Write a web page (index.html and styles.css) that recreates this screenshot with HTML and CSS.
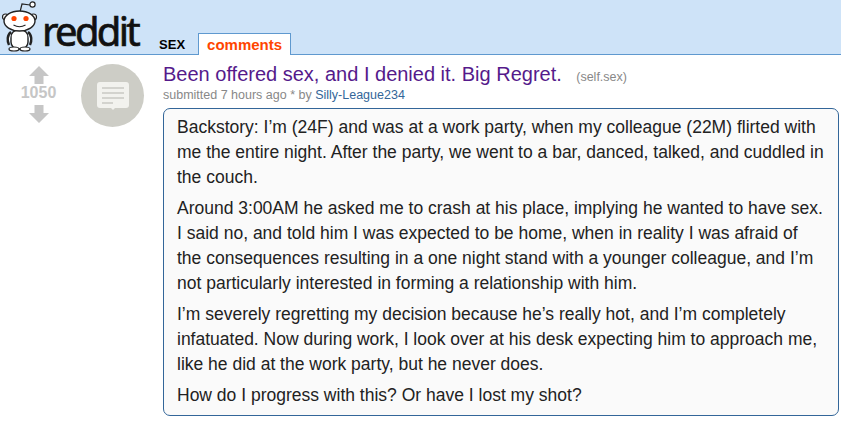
FILE: index.html
```html
<!DOCTYPE html>
<html lang="en">

<head>
    <meta charset="UTF-8">
    <meta name="viewport" content="width=device-width, initial-scale=1.0">
    <title>Been offered sex, and I denied it. Big Regret.</title>
    <link rel="stylesheet" href="styles.css">
</head>

<body>
    <div class="header">
        <svg class="snoo" width="38" height="52" viewBox="0 0 38 52">
            <path d="M18.500 13 L21 3 L29 4" fill="none" stroke="#222" stroke-width="1.2" />
            <circle cx="31.500" cy="3.500" r="2.600" fill="#fff" stroke="#222" stroke-width="1.2" />
            <circle cx="4.500" cy="16" r="3" fill="#fff" stroke="#222" stroke-width="1.2" />
            <circle cx="32.500" cy="16" r="3" fill="#fff" stroke="#222" stroke-width="1.2" />
            <rect x="10" y="29" width="17" height="19" rx="7" fill="#fff" stroke="#222" stroke-width="1.4" />
            <path d="M10 31 C6 34 6 40 8 44 M27 31 C31 34 31 40 29 44" fill="#fff" stroke="#222" stroke-width="2.4" />
            <ellipse cx="13" cy="48" rx="5" ry="2" fill="#fff" stroke="#222" stroke-width="1.2" />
            <ellipse cx="24" cy="48" rx="5" ry="2" fill="#fff" stroke="#222" stroke-width="1.2" />
            <ellipse cx="18.500" cy="20" rx="15.500" ry="10" fill="#fff" stroke="#222" stroke-width="1.4" />
            <circle cx="13" cy="17.500" r="2.600" fill="#ff4500" />
            <circle cx="25" cy="17.500" r="2.600" fill="#ff4500" />
            <path d="M12.500 24 Q18.500 27.500 24.500 24" fill="none" stroke="#222" stroke-width="1.1" />
        </svg>
        <span class="wordmark">reddit</span>
        <span class="subreddit">SEX</span>
        <span class="tab">comments</span>
    </div>

    <div class="content">
        <div class="votes">
            <svg width="20" height="18" viewBox="0 0 20 18"><path d="M10 0 L20 10 L14.500 10 L14.500 18 L5.500 18 L5.500 10 L0 10 Z" fill="#c6c6c6" /></svg>
            <span class="score">1050</span>
            <svg width="20" height="18" viewBox="0 0 20 18"><path d="M10 18 L20 8 L14.500 8 L14.500 0 L5.500 0 L5.500 8 L0 8 Z" fill="#c6c6c6" /></svg>
        </div>
        <div class="thumb">
            <svg width="32" height="28" viewBox="0 0 32 28">
                <path d="M3 0 H29 Q32 0 32 3 V23 Q32 26 29 26 H18 L16 28 L14 26 H3 Q0 26 0 23 V3 Q0 0 3 0 Z" fill="#f2f2ee" />
                <path d="M5 6 H27 M5 11 H27 M5 16 H27 M5 21 H16" stroke="#c9c9c4" stroke-width="1.6" />
            </svg>
        </div>
        <div class="post">
            <div class="title-row">
                <a class="title">Been offered sex, and I denied it. Big Regret.</a>
                <span class="domain">(self.sex)</span>
            </div>
            <div class="tagline">submitted 7 hours ago * by <a class="author">Silly-League234</a></div>
            <div class="usertext">
                <p>Backstory: I’m (24F) and was at a work party, when my colleague (22M) flirted with me the entire night. After the party, we went to a bar, danced, talked, and cuddled in the couch.</p>
                <p>Around 3:00AM he asked me to crash at his place, implying he wanted to have sex. I said no, and told him I was expected to be home, when in reality I was afraid of the consequences resulting in a one night stand with a younger colleague, and I’m not particularly interested in forming a relationship with him.</p>
                <p>I’m severely regretting my decision because he’s really hot, and I’m completely infatuated. Now during work, I look over at his desk expecting him to approach me, like he did at the work party, but he never does.</p>
                <p>How do I progress with this? Or have I lost my shot?</p>
            </div>
        </div>
    </div>
</body>

</html>
```

FILE: styles.css
```css
body {
    font-family: "Liberation Sans", Arial, sans-serif;
    margin: 0;
    padding: 0;
    background-color: #fff;
    color: #222;
}

.header {
    display: flex;
    align-items: flex-end;
    height: 54px;
    background-color: #cee3f8;
    border-bottom: 1px solid #5f99cf;
}

.snoo {
    margin: 0 0 1px 1px;
    flex-shrink: 0;
}

.wordmark {
    font-family: "Noto Sans", "DejaVu Sans", sans-serif;
    font-size: 40px;
    line-height: 40px;
    color: #111;
    margin: 0 0 3px 3px;
    letter-spacing: -2.7px;
    -webkit-text-stroke: 0.7px #111;
}

.subreddit {
    font-size: 13px;
    font-weight: bold;
    color: #000;
    margin: 0 0 2px 21px;
}

.tab {
    font-size: 15px;
    font-weight: bold;
    color: #ff4500;
    background: #fff;
    border: 1px solid #5f99cf;
    border-bottom: none;
    padding: 2px 8px 2px 8px;
    margin: 0 0 -1px 13px;
}

.content {
    display: flex;
    padding-top: 9px;
}

.votes {
    width: 77px;
    margin-top: 2px;
    display: flex;
    flex-direction: column;
    align-items: center;
    flex-shrink: 0;
}

.score {
    font-size: 16px;
    line-height: 18px;
    font-weight: bold;
    color: #c6c6c6;
    margin-bottom: 3px;
}

.thumb {
    width: 63px;
    height: 63px;
    margin: 0 0 0 4px;
    border-radius: 50%;
    background-color: #cdcdc6;
    display: flex;
    align-items: center;
    justify-content: center;
    flex-shrink: 0;
}

.post {
    margin-left: 19px;
    width: 676px;
}

.title-row {
    line-height: 21px;
}

.title {
    font-size: 20px;
    color: #551a8b;
}

.domain {
    font-size: 12.5px;
    color: #888;
    margin-left: 10px;
}

.tagline {
    font-size: 12.5px;
    line-height: 15px;
    color: #888;
}

.author {
    color: #369;
}

.usertext {
    margin-top: 5px;
    padding: 6px 12px 7px 13px;
    background-color: #fafafa;
    border: 1px solid #369;
    border-radius: 7px;
    font-size: 17.5px;
    line-height: 25px;
}

.usertext p {
    margin: 0 0 6px;
}

.usertext p:last-child {
    margin-bottom: 0;
}
```
